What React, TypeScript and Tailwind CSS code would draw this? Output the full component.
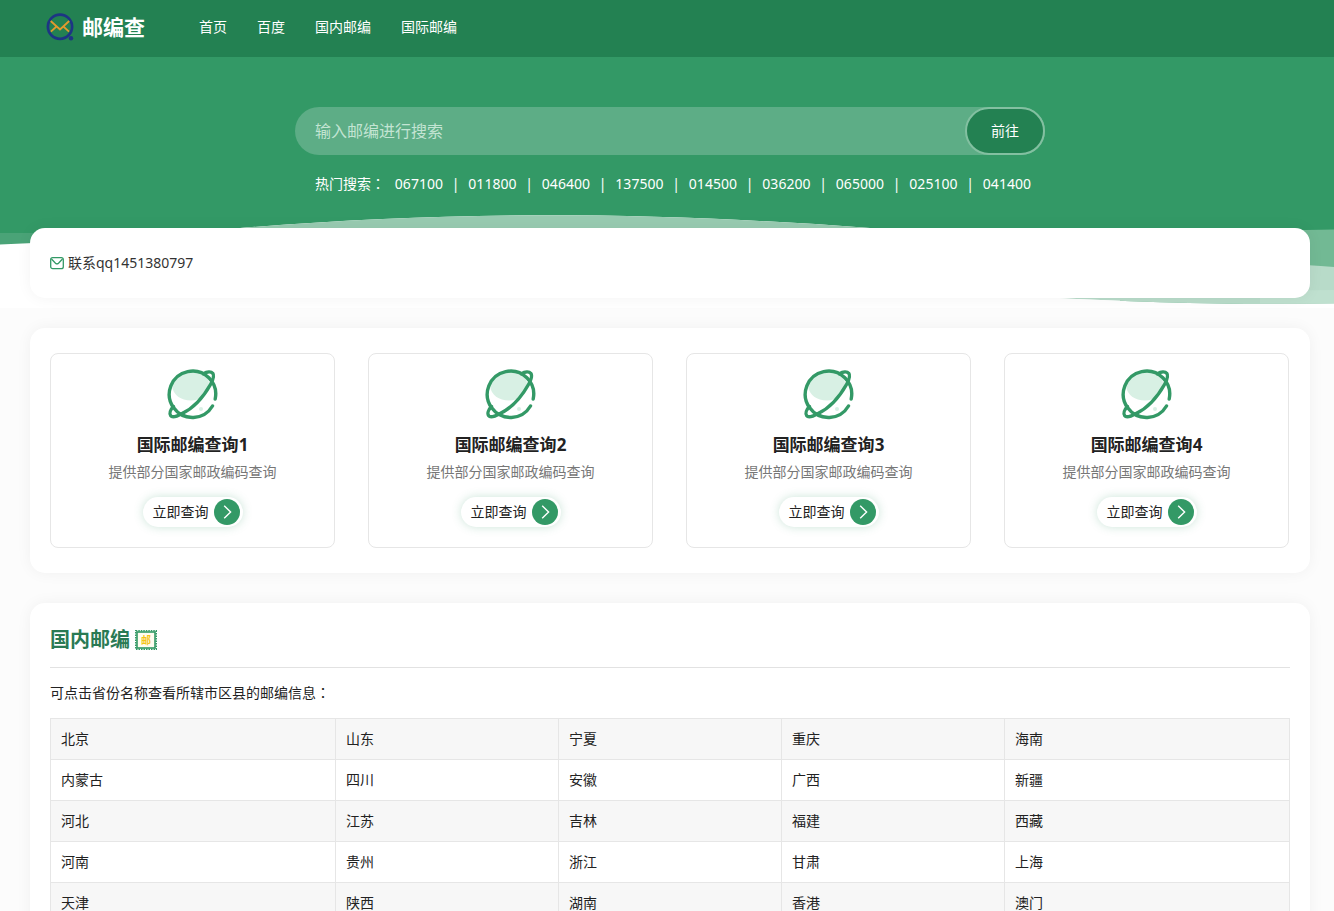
import React from "react";

const navItems = ["首页", "百度", "国内邮编", "国际邮编"];

const hotCodes = [
  "067100",
  "011800",
  "046400",
  "137500",
  "014500",
  "036200",
  "065000",
  "025100",
  "041400",
];

const services = [1, 2, 3, 4];

const provinces = [
  ["北京", "山东", "宁夏", "重庆", "海南"],
  ["内蒙古", "四川", "安徽", "广西", "新疆"],
  ["河北", "江苏", "吉林", "福建", "西藏"],
  ["河南", "贵州", "浙江", "甘肃", "上海"],
  ["天津", "陕西", "湖南", "香港", "澳门"],
];

function Logo() {
  return (
    <svg className="size-7" viewBox="0 0 28 28" fill="none" aria-hidden="true">
      <circle cx="14" cy="13.7" r="12.1" stroke="#1d3584" strokeWidth="2.7" />
      <circle cx="25" cy="25.3" r="2.2" fill="#1d3584" />
      <path
        d="M4.9 18.700 L10.500 13.500 M23 18.700 L17.400 13.500 M4.700 8 L14 16.500 L23.200 8"
        stroke="#e39a2d"
        strokeWidth="1.8"
      />
    </svg>
  );
}

function Planet() {
  return (
    <svg className="size-14" viewBox="0 0 56 56" fill="none" aria-hidden="true">
      <path
        d="M27 4 C37 4 44 8 44 16 C44 26 36 32.500 26 32.500 C16 32.500 8 27 7 18 C11 8 19 4 27 4Z"
        fill="#d8f0e4"
      />
      <circle cx="36" cy="41" r="2" fill="#d8f0e4" />
      <g stroke="#339966" strokeWidth="3.400" strokeLinecap="round" transform="translate(-1 -1)">
        <path d="M51.200 32 A23.200 23.200 0 1 0 48.500 39" />
        <path d="M39.500 6.800 C43 4.600 47 4.300 48.800 6.300 C50.500 8.500 48.700 13.500 46.500 17.500 C40 29 30 41 18 46.500 C12 50 8 50.500 6.700 48.800 C5 46.500 6.500 42.500 9.500 39.500" />
      </g>
    </svg>
  );
}

function Stamp() {
  return (
    <svg className="h-5 w-[22px]" viewBox="0 0 22 20" aria-hidden="true">
      <rect x="0.800" y="0.800" width="20.400" height="18.400" fill="#fffdf0" stroke="#339966" strokeWidth="1.600" strokeDasharray="1.500 1" />
      <rect x="2" y="2" width="18" height="16" fill="#fffdf0" stroke="#339966" strokeWidth="1.600" />
      <text x="11" y="13.800" textAnchor="middle" fontSize="10" fontWeight="bold" fill="#f5c518">
        邮
      </text>
    </svg>
  );
}

function Colon() {
  return <span className="font-['Noto_Sans_CJK_TC',sans-serif] leading-none">：</span>;
}

function Waves() {
  return (
    <svg
      className="absolute inset-x-0 bottom-0 h-[98px] w-full"
      viewBox="0 210 1334 98"
      preserveAspectRatio="none"
      aria-hidden="true"
    >
      <path d="M0 210 H1334 V308 H0Z" fill="#339966" />
      <path d="M0 233 H100 V308 H0Z" fill="#4aa377" />
      <path d="M0 244.500 L100 240 L240 228 C450 211 640 211 870 228 L1040 297 H1120 V308 H0Z" fill="#ffffff" />
      <path d="M240 228 C450 211 640 211 870 228Z" fill="#98cbb1" />
      <path d="M1200 233 Q1290 230 1334 229.500 V270 H1200Z" fill="#72b994" />
      <path d="M1040 297 L1200 262 Q1290 263 1334 267 V303.500 Q1200 306 1040 297Z" fill="#b8dbc9" />
      <path d="M1260 291 L1334 290 V303.500 H1260Z" fill="#bfe0cf" />
      <path d="M1040 297 Q1200 306 1334 303.500 V308 H1040Z" fill="#ffffff" />
    </svg>
  );
}

export default function App() {
  return (
    <div className="min-h-screen overflow-hidden bg-[#fcfcfc] font-['Noto_Sans','Noto_Sans_CJK_SC',sans-serif] text-sm text-[#222]">
      <div className="relative bg-[#339966] pb-20">
        <Waves />
        <header className="relative flex h-[57px] items-center bg-[#238152] pr-6 pb-[3px] pl-[46px] text-white">
          <a href="#" className="flex items-center gap-2 text-[21px] leading-7 font-bold">
            <Logo />
            邮编查
          </a>
          <nav className="ml-[54px] flex gap-[30px]">
            {navItems.map((item) => (
              <a key={item} href="#">
                {item}
              </a>
            ))}
          </nav>
        </header>
        <div className="relative pt-[50px] pr-6 pl-[30px]">
          <div className="mx-auto max-w-[750px]">
            <form className="flex h-12 rounded-full bg-[#5dad86]" onSubmit={(e) => e.preventDefault()}>
              <input
                type="text"
                aria-label="输入邮编进行搜索"
                placeholder="输入邮编进行搜索"
                className="min-w-0 flex-1 bg-transparent px-5 text-base text-white outline-none placeholder:text-[#c3e4d3]"
              />
              <button
                type="submit"
                className="w-20 rounded-full border-2 border-[#83c0a1] bg-[#238152] text-white"
              >
                前往
              </button>
            </form>
            <div className="flex items-center justify-between pt-[18px] pr-3.5 pl-5 leading-[22px] text-white">
              <span className="w-[71px] whitespace-nowrap">
                热门搜索
                <Colon />
              </span>
              {hotCodes.map((code, i) => (
                <React.Fragment key={code}>
                  {i > 0 && <span>|</span>}
                  <a href="#">{code}</a>
                </React.Fragment>
              ))}
            </div>
          </div>
        </div>
        <div className="h-[33px]" />
      </div>

      <main className="relative -mt-20 flex flex-col gap-[30px] pr-6 pl-[30px]">
        <section className="flex h-[70px] items-center rounded-[15px] bg-white px-5 shadow-[0_0_15px_rgba(0,0,0,0.05)]">
          <a href="#" className="flex items-center gap-1 text-[#333]">
            <svg className="size-3.5" viewBox="0 0 14 14" fill="none" stroke="#339966" aria-hidden="true">
              <rect x="0.700" y="1.700" width="12.600" height="11" rx="2" strokeWidth="1.300" />
              <path d="M1.500 3 L5.500 7.200 Q7 8.500 8.500 7.200 L12.500 3" strokeWidth="1.300" />
            </svg>
            联系qq1451380797
          </a>
        </section>

        <section className="grid grid-cols-4 gap-[33px] rounded-[15px] bg-white py-[25px] pr-[21px] pl-5 shadow-[0_0_15px_rgba(0,0,0,0.05)]">
          {services.map((n) => (
            <article
              key={n}
              className="flex flex-col items-center rounded-lg border border-[#e6e6e6] pt-3.5 pb-5"
            >
              <Planet />
              <h3 className="mt-[7px] text-[17px] leading-7 font-bold">国际邮编查询{n}</h3>
              <p className="mt-[3px] leading-5 text-[#777]">提供部分国家邮政编码查询</p>
              <a
                href="#"
                className="mt-[15px] flex h-[30px] items-center gap-[5px] rounded-full bg-white pr-[3px] pl-2.5 shadow-[0_0_10px_rgba(51,153,102,0.25)]"
              >
                立即查询
                <span className="flex size-[26px] items-center justify-center rounded-full bg-[#339966]">
                  <svg className="size-3.5" viewBox="0 0 14 14" fill="none" stroke="#fff" strokeWidth="1.400" aria-hidden="true">
                    <path d="M4.200 0.800 L10.600 7 L4.200 13.200" />
                  </svg>
                </span>
              </a>
            </article>
          ))}
        </section>

        <section className="rounded-[15px] bg-white px-5 pt-[21px] pb-5 shadow-[0_0_15px_rgba(0,0,0,0.05)]">
          <div className="flex items-center gap-[5px] border-b border-[#e2e2e2] pb-[11px]">
            <h2 className="text-xl leading-8 font-bold text-[#2a7a54]">国内邮编</h2>
            <Stamp />
          </div>
          <p className="py-[15px] leading-5">
            可点击省份名称查看所辖市区县的邮编信息
            <Colon />
          </p>
          <table className="w-full table-fixed border-collapse">
            <colgroup>
              <col className="w-[23%]" />
              <col className="w-[18%]" />
              <col className="w-[18%]" />
              <col className="w-[18%]" />
              <col className="w-[23%]" />
            </colgroup>
            <tbody>
              {provinces.map((row) => (
                <tr key={row[0]} className="odd:bg-[#f7f7f7]">
                  {row.map((name) => (
                    <td key={name} className="border border-[#e6e6e6] px-2.5 py-2.5 leading-5">
                      <a href="#">{name}</a>
                    </td>
                  ))}
                </tr>
              ))}
            </tbody>
          </table>
        </section>
      </main>
    </div>
  );
}
